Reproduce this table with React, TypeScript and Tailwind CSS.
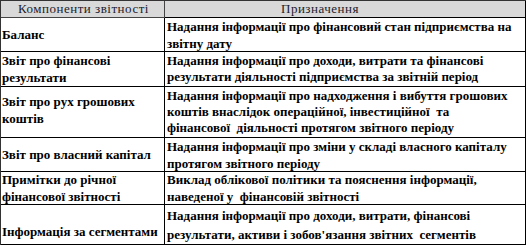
const rows: { name: string[]; text: string[]; h: string; lead: string; namePad?: string }[] = [
  {
    name: ["Баланс"],
    text: ["Надання інформації про фінансовий стан підприємства на", "звітну дату"],
    h: "h-[34px]",
    lead: "leading-[17px]",
  },
  {
    name: ["Звіт про фінансові", "результати"],
    text: ["Надання інформації про доходи, витрати та фінансові", "результати діяльності підприємства за звітній період"],
    h: "h-[35px]",
    lead: "leading-[16px]",
  },
  {
    name: ["Звіт про рух грошових", "коштів"],
    text: [
      "Надання інформації про надходження і вибуття грошових",
      "коштів внаслідок операційної, інвестиційної  та",
      "фінансової  діяльності протягом звітного періоду",
    ],
    h: "h-[51px]",
    lead: "leading-[16px]",
    namePad: "pt-[6px]",
  },
  {
    name: ["Звіт про власний капітал"],
    text: ["Надання інформації про зміни у складі власного капіталу", "протягом звітного періоду"],
    h: "h-[34px]",
    lead: "leading-[17px]",
  },
  {
    name: ["Примітки до річної", "фінансової звітності"],
    text: ["Виклад облікової політики та пояснення інформації,", "наведеної у  фінансовій звітності"],
    h: "h-[33px]",
    lead: "leading-[17px]",
  },
  {
    name: ["Інформація за сегментами"],
    text: ["Надання інформації про доходи, витрати, фінансові", "результати, активи і зобов'язання звітних  сегментів"],
    h: "h-[40px]",
    lead: "leading-[19px]",
    namePad: "pt-[18px]",
  },
];

export default function App() {
  return (
    <div className="bg-white w-[527px] h-[246px] text-black font-['Liberation_Serif','DejaVu_Serif',serif]">
      <div className="w-[526px] border-l border-t border-[#333]">
        <div className="grid grid-cols-[164px_361px] h-[17px] bg-[#d9d9d9] text-[13px] leading-[16px] text-[#1c1c2c]">
          <div className="border-r border-b border-[#444] pl-[17px] tracking-[0.5px] whitespace-nowrap">Компоненти звітності</div>
          <div className="border-r border-b border-black pl-[116px] tracking-[0.5px] whitespace-nowrap">Призначення</div>
        </div>
        {rows.map((r, i) => (
          <div key={i} className={`grid grid-cols-[164px_361px] ${r.h} text-[13px] font-bold`}>
            <div className={`border-r border-b border-black pl-[1px] flex flex-col ${r.namePad ? "justify-start " + r.namePad : "justify-center"} leading-[17px] whitespace-nowrap overflow-hidden`}>
              {r.name.map((l, j) => (
                <span key={j}>{l}</span>
              ))}
            </div>
            <div className={`border-r border-b border-black pl-[2px] flex flex-col justify-center ${r.lead} whitespace-pre overflow-hidden`}>
              {r.text.map((l, j) => (
                <span key={j}>{l}</span>
              ))}
            </div>
          </div>
        ))}
      </div>
    </div>
  );
}
